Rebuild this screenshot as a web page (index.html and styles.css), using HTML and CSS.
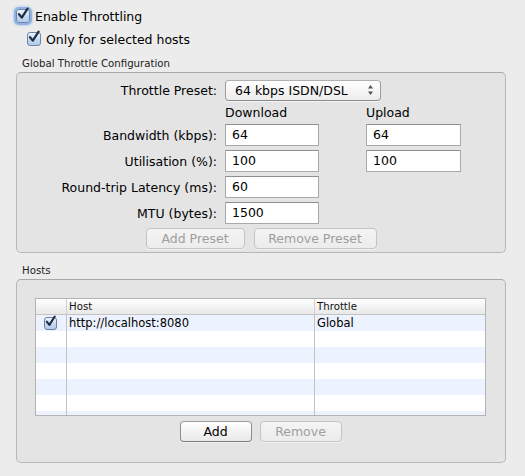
FILE: index.html
```html
<!DOCTYPE html>
<html>
<head>
<meta charset="utf-8">
<link rel="stylesheet" href="styles.css">
</head>
<body>
<div class="window">
  <div class="check main">
    <span class="box focus"><svg viewBox="0 0 14 14" width="14" height="14"><path d="M3 7.2 L5.8 10.6 L11.6 1.6" fill="none" stroke="#1d2b44" stroke-width="2.2" stroke-linecap="round" stroke-linejoin="round"/></svg></span>
    <span>Enable Throttling</span>
  </div>
  <div class="check sub">
    <span class="box"><svg viewBox="0 0 14 14" width="14" height="14"><path d="M3 7.2 L5.8 10.6 L11.6 1.6" fill="none" stroke="#1d2b44" stroke-width="2.2" stroke-linecap="round" stroke-linejoin="round"/></svg></span>
    <span>Only for selected hosts</span>
  </div>

  <div class="section-title">Global Throttle Configuration</div>
  <div class="group config">
    <div class="form">
      <span class="lbl">Throttle Preset:</span>
      <div class="popup"><span>64 kbps ISDN/DSL</span><svg class="arrows" viewBox="0 0 7 12" width="7" height="12"><path d="M3.5 1 L6 4.5 L1 4.5 Z M3.5 11 L6 7.5 L1 7.5 Z" fill="#555"/></svg></div>

      <span></span><span class="colhead">Download</span><span></span><span class="colhead">Upload</span>

      <span class="lbl">Bandwidth (kbps):</span><div class="field">64</div><span></span><div class="field">64</div>
      <span class="lbl">Utilisation (%):</span><div class="field">100</div><span></span><div class="field">100</div>
      <span class="lbl">Round-trip Latency (ms):</span><div class="field">60</div><span></span><span></span>
      <span class="lbl">MTU (bytes):</span><div class="field">1500</div><span></span><span></span>
    </div>
    <div class="btnrow preset-btns">
      <button class="btn disabled w-addp">Add Preset</button>
      <button class="btn disabled w-remp">Remove Preset</button>
    </div>
  </div>

  <div class="section-title hosts-title">Hosts</div>
  <div class="group hosts">
    <div class="table">
      <div class="thead">
        <div class="c1"></div>
        <div class="c2">Host</div>
        <div class="c3">Throttle</div>
      </div>
      <div class="tbody">
        <div class="row">
          <div class="c1"><span class="box small"><svg viewBox="0 0 14 14" width="13" height="13"><path d="M3 7.2 L5.8 10.6 L11.6 1.6" fill="none" stroke="#1d2b44" stroke-width="2.2" stroke-linecap="round" stroke-linejoin="round"/></svg></span></div>
          <div class="c2">http://localhost:8080</div>
          <div class="c3">Global</div>
        </div>
        <div class="row"><div class="c1"></div><div class="c2"></div><div class="c3"></div></div>
        <div class="row"><div class="c1"></div><div class="c2"></div><div class="c3"></div></div>
        <div class="row"><div class="c1"></div><div class="c2"></div><div class="c3"></div></div>
        <div class="row"><div class="c1"></div><div class="c2"></div><div class="c3"></div></div>
        <div class="row"><div class="c1"></div><div class="c2"></div><div class="c3"></div></div>
        <div class="row"><div class="c1"></div><div class="c2"></div><div class="c3"></div></div>
      </div>
    </div>
    <div class="btnrow host-btns">
      <button class="btn w-add">Add</button>
      <button class="btn disabled w-rem">Remove</button>
    </div>
  </div>
</div>
</body>
</html>
```

FILE: styles.css
```css
* { box-sizing: border-box; }
html, body { margin: 0; padding: 0; }
body {
  background: #ececec;
  font-family: "DejaVu Sans", "Liberation Sans", sans-serif;
  font-size: 12.5px;
  color: #000;
  width: 525px;
  height: 476px;
  overflow: hidden;
}
.window {
  padding: 8px 19px 0 16px;
}

.check {
  display: flex;
  align-items: center;
  height: 16px;
}
.check .box { margin-right: 5px; }
.check.sub { margin-top: 7px; padding-left: 11px; }

.box {
  width: 14px;
  height: 14px;
  border: 1px solid #6e85a6;
  border-radius: 3px;
  background: linear-gradient(#eef4fd, #c5d8f1 55%, #b4cbea);
  position: relative;
  display: inline-block;
  flex: none;
}
.box svg { position: absolute; left: -1px; top: -3px; overflow: visible; }
.box.focus { box-shadow: 0 0 0 2px rgba(98, 150, 220, 0.55), 0 0 2px 3px rgba(120, 170, 235, 0.35); }
.box.small { width: 13px; height: 13px; border-color: #6e7f99; }
.box.small svg { left: -1px; top: -3px; }

.section-title {
  margin-top: 10px;
  padding-left: 6px;
  height: 13px;
  line-height: 13px;
  font-size: 10.2px;
  color: #222;
}
.hosts-title { margin-top: 11px; }

.group {
  margin-top: 2px;
  width: 490px;
  border: 1px solid #b7b7b7;
  border-top-color: #a9a9a9;
  border-radius: 5px;
  background: #e4e4e4;
}
.group.config { height: 181px; padding-top: 6px; }
.group.hosts { height: 184px; padding: 18px 19px 0 18px; }

.form {
  display: grid;
  grid-template-columns: 208px 94px 47px 95px;
  grid-template-rows: 22px 15px 22px 22px 22px 22px;
  row-gap: 4px;
  align-items: center;
}
.lbl {
  text-align: right;
  padding-right: 8px;
  white-space: nowrap;
}
.colhead { line-height: 15px; }

.popup {
  grid-column: 2 / span 3;
  width: 156px;
  height: 21px;
  border: 1px solid #9d9d9d;
  border-top-color: #b0b0b0;
  border-bottom-color: #8c8c8c;
  border-radius: 4px;
  background: linear-gradient(#ffffff, #f6f6f6 50%, #ececec);
  box-shadow: 0 1px 0 rgba(255,255,255,0.6);
  display: flex;
  align-items: center;
  justify-content: space-between;
  padding: 0 6px 0 9px;
}
.arrows { display: block; }

.field {
  height: 22px;
  border: 1px solid #a9a9a9;
  border-top-color: #8e8e8e;
  background: #fff;
  padding-left: 6px;
  line-height: 20px;
}

.btnrow {
  display: flex;
  justify-content: center;
}
.preset-btns { margin-top: 4px; gap: 9px; }
.host-btns { margin-top: 5px; gap: 8px; }

.btn {
  font-family: inherit;
  font-size: 12.5px;
  height: 21px;
  padding: 0;
  border: 1px solid #8e8e8e;
  border-top-color: #9d9d9d;
  border-bottom-color: #7d7d7d;
  border-radius: 4px;
  background: linear-gradient(#ffffff, #f3f3f3 50%, #e9e9e9);
  color: #000;
  box-shadow: 0 1px 0 rgba(255,255,255,0.5);
}
.btn.disabled {
  color: #9e9e9e;
  border-color: #c4c4c4;
  background: linear-gradient(#f4f4f4, #ececec);
}
.w-addp { width: 99px; }
.w-remp { width: 123px; }
.w-add { width: 72px; }
.w-rem { width: 82px; }

.table {
  width: 451px;
  height: 118px;
  border: 1px solid #b4b4b4;
  background: #fff;
  overflow: hidden;
}
.thead {
  display: flex;
  height: 16px;
  border-bottom: 1px solid #c4c4c4;
  background: linear-gradient(#ffffff, #f4f4f4 50%, #e8e8e8);
  font-size: 10.2px;
  line-height: 15px;
  color: #111;
}
.c1 { width: 31px; flex: none; border-right: 1px solid #c2c2c2; display: flex; align-items: center; justify-content: center; }
.c2 { width: 248px; flex: none; border-right: 1px solid #c2c2c2; padding-left: 2px; }
.c3 { flex: 1; padding-left: 2px; }
.thead .c1, .thead .c2 { border-right-color: #d0d0d0; }
.tbody { height: 100px; overflow: hidden; }
.row {
  display: flex;
  height: 16px;
  line-height: 16px;
  font-size: 11.5px;
}
.row:nth-child(odd) { background: #edf3fe; }
.row .c1 { padding-right: 2px; }
```
